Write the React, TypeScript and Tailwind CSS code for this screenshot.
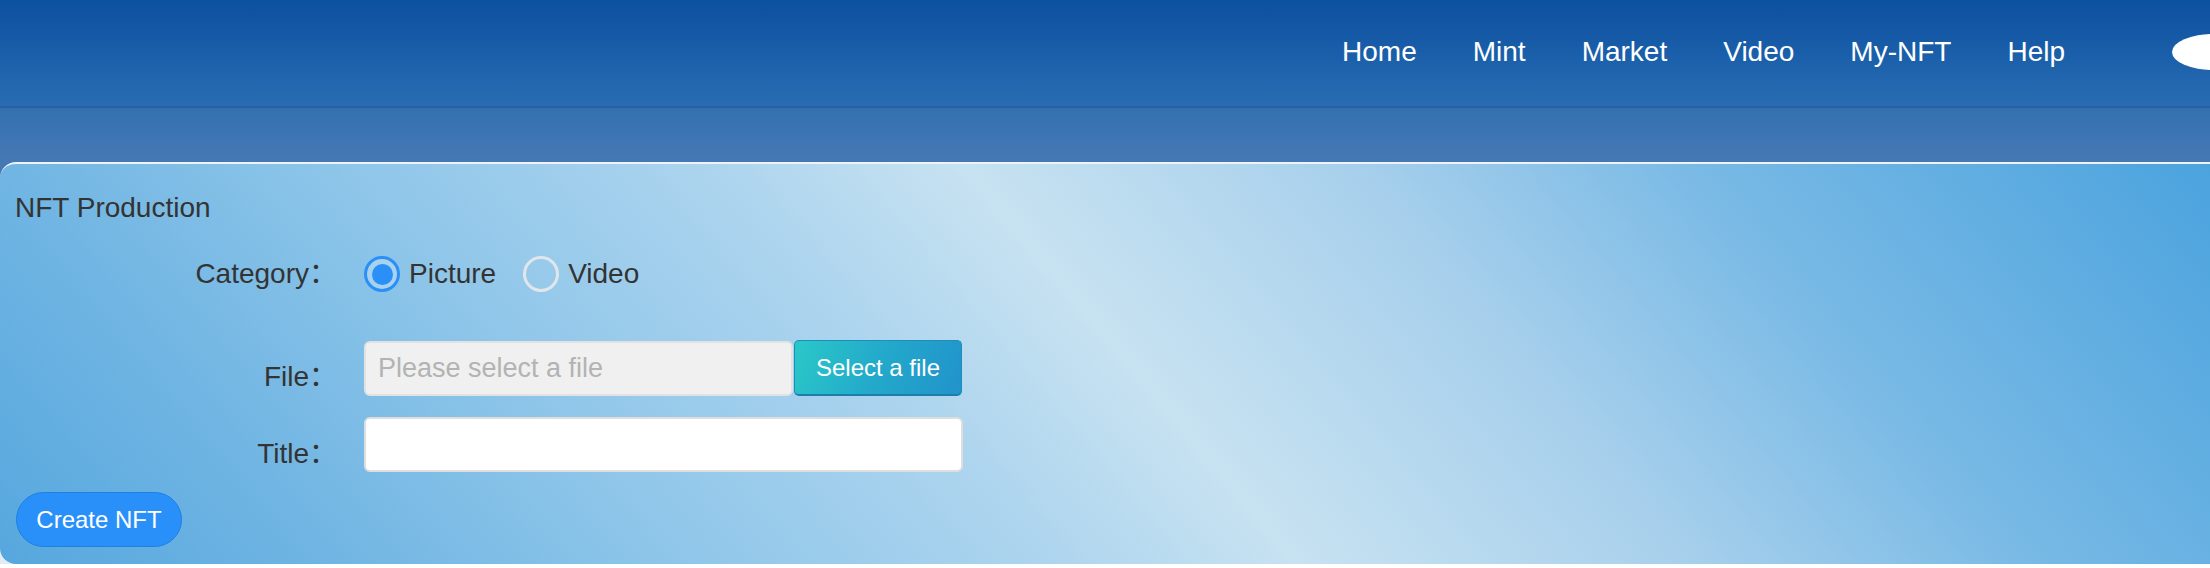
import React from 'react'

const navItems = ['Home', 'Mint', 'Market', 'Video', 'My-NFT', 'Help']

function Radio({ checked, label }: { checked?: boolean; label: string }) {
  return (
    <label className="flex items-center">
      <span
        className={
          checked
            ? 'flex h-[36px] w-[36px] items-center justify-center rounded-full border-[3px] border-[#2a8ff7] bg-white/25'
            : 'flex h-[36px] w-[36px] items-center justify-center rounded-full border-[3px] border-[#e1e6ea]'
        }
      >
        {checked && <span className="h-[21px] w-[21px] rounded-full bg-[#2a8ff7]" />}
      </span>
      <span className="ml-[9px] leading-[28px]">{label}</span>
    </label>
  )
}

export default function App() {
  return (
    <div
      className="h-[568px] w-full overflow-hidden text-[28px] text-[#333]"
      style={{ fontFamily: '"Liberation Sans", "Noto Sans CJK SC", sans-serif' }}
    >
      {/* 顶部导航 */}
      <header className="flex h-[108px] items-center justify-end overflow-hidden border-b-2 border-[#2a5f9b] bg-[linear-gradient(180deg,#0c50a0_0%,#286db3_100%)] pb-[2px]">
        <nav className="flex gap-[56px] text-white">
          {navItems.map((item) => (
            <a key={item} href="#" className="leading-[28px]">
              {item}
            </a>
          ))}
        </nav>
        <div className="ml-[107px] -mr-[46px] h-[36px] w-[84px] shrink-0 rounded-[50%] bg-white" />
      </header>

      <div className="bg-[linear-gradient(180deg,#3470b0_0px,#4679b4_54px,#4679b4_80px,#e3ecf4_80px)] pt-[54px]">
        <div className="rounded-l-[16px] border-t-2 border-[#eef3f8] bg-[linear-gradient(50deg,#56a7de_0%,#70b5e3_13%,#8dc5e9_26%,#aad3ee_40%,#c7e2f1_51%,#a8d0ec_66%,#78b9e5_80%,#4ba3de_100%)] pb-[17px] pl-[15px] pt-[30px]">
          <h2 className="leading-[28px]">NFT Production</h2>

          <div className="mt-[34px] flex items-center">
            <div className="w-[322px] shrink-0 text-right leading-[28px]">Category：</div>
            <div className="ml-[27px] flex items-center gap-[27px]">
              <Radio checked label="Picture" />
              <Radio label="Video" />
            </div>
          </div>

          <div className="mt-[48px] flex items-start">
            <div className="w-[322px] shrink-0 pt-[23px] text-right leading-[28px]">File：</div>
            <div className="ml-[27px] flex items-start gap-px">
              <input
                readOnly
                placeholder="Please select a file"
                className="mt-px h-[55px] w-[429px] rounded-[6px] border-2 border-[#e2e2e2] bg-[#f0f0f0] pl-[12px] text-[27px] outline-none placeholder:text-[#b3b3b3]"
              />
              <button className="h-[56px] w-[168px] rounded-[5px] border border-b-2 border-[#1f8db9] border-b-[#1b7eab] bg-[linear-gradient(110deg,#2ac8c8_0%,#23a9cb_50%,#2193cb_100%)] text-[24px] text-white">
                Select a file
              </button>
            </div>
          </div>

          <div className="mt-[21px] flex items-start">
            <div className="w-[322px] shrink-0 pt-[23px] text-right leading-[28px]">Title：</div>
            <input
              className="ml-[27px] h-[55px] w-[599px] rounded-[6px] border-2 border-[#dedede] bg-white pl-[12px] text-[27px] outline-none"
            />
          </div>

          <button className="ml-px mt-[20px] h-[55px] w-[166px] rounded-full border border-[#1f80e0] bg-[#2990fa] text-[24px] text-white">
            Create NFT
          </button>
        </div>
      </div>
    </div>
  )
}
